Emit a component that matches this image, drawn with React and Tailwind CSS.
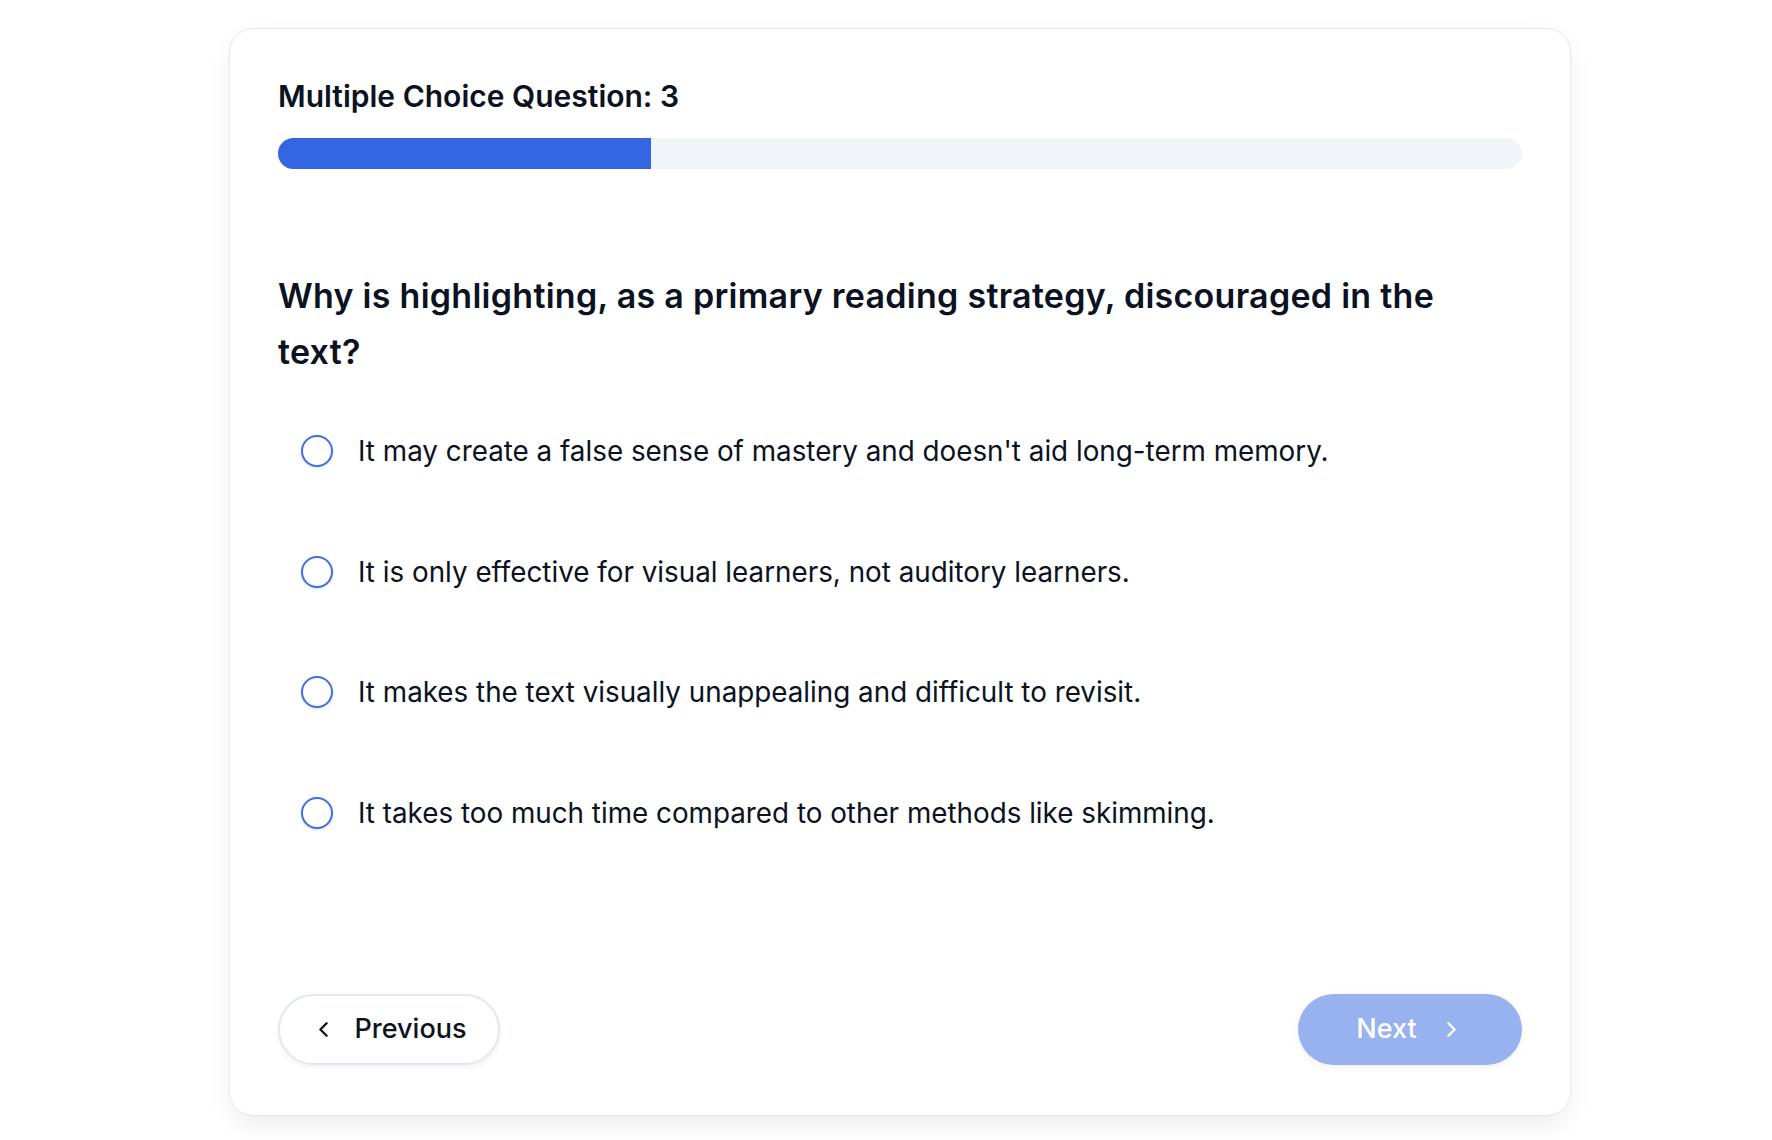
import React, { useState } from 'react';
import { ChevronLeft, ChevronRight } from 'lucide-react';

const options = [
  "It may create a false sense of mastery and doesn't aid long-term memory.",
  'It is only effective for visual learners, not auditory learners.',
  'It makes the text visually unappealing and difficult to revisit.',
  'It takes too much time compared to other methods like skimming.',
];

export default function App() {
  const [selected, setSelected] = useState(null);
  const progress = 30;

  return (
    <div className="min-h-screen bg-white pt-[28px] pl-[229px] font-['Inter',sans-serif] text-[#0b1221]">
      <div className="w-[1342px] rounded-[24px] border border-[#e2e8f0] bg-white px-12 pt-[46px] pb-[50px] shadow-[0_10px_30px_-8px_rgba(15,23,42,0.12)]">
        <h2 className="text-[30px] font-semibold leading-[42px]">Multiple Choice Question: 3</h2>

        <div className="mt-[21px] h-[31px] w-full overflow-hidden rounded-full bg-[#f1f5f9]">
          <div className="h-full bg-[#3366e0]" style={{ width: `${progress}%` }} />
        </div>

        <h3 className="mt-[99px] text-[34px] font-semibold leading-[56px] tracking-[0.008em]">
          Why is highlighting, as a primary reading strategy, discouraged in the text?
        </h3>

        <div className="mt-[35px] flex flex-col gap-[48.5px]">
          {options.map((opt, i) => (
            <label key={i} className="flex h-[72px] cursor-pointer items-center gap-[25px] pl-[23px]">
              <span className="flex h-[32px] w-[32px] shrink-0 items-center justify-center rounded-full border-2 border-[#3d6fe6] bg-white shadow-[0_1px_3px_rgba(15,23,42,0.15)]">
                {selected === i && <span className="h-[15px] w-[15px] rounded-full bg-[#3366e0]" />}
              </span>
              <input
                type="radio"
                name="q3"
                className="hidden"
                checked={selected === i}
                onChange={() => setSelected(i)}
              />
              <span className="text-[27.8px] leading-[36px]">{opt}</span>
            </label>
          ))}
        </div>

        <div className="mt-[145px] flex items-center justify-between">
          <button className="flex h-[71px] w-[222px] items-center justify-center gap-[18px] rounded-full border-2 border-[#e2e8f0] bg-white text-[27px] font-medium shadow-[0_2px_6px_rgba(15,23,42,0.06)]">
            <ChevronLeft size={25} strokeWidth={2.25} />
            Previous
          </button>
          <button
            disabled
            className="flex h-[71px] w-[224px] items-center justify-center gap-[22px] rounded-full bg-[#3366e0] text-[27px] font-medium text-white opacity-50 shadow-[0_2px_6px_rgba(15,23,42,0.12)]"
          >
            Next
            <ChevronRight size={25} strokeWidth={2.25} />
          </button>
        </div>
      </div>
    </div>
  );
}
